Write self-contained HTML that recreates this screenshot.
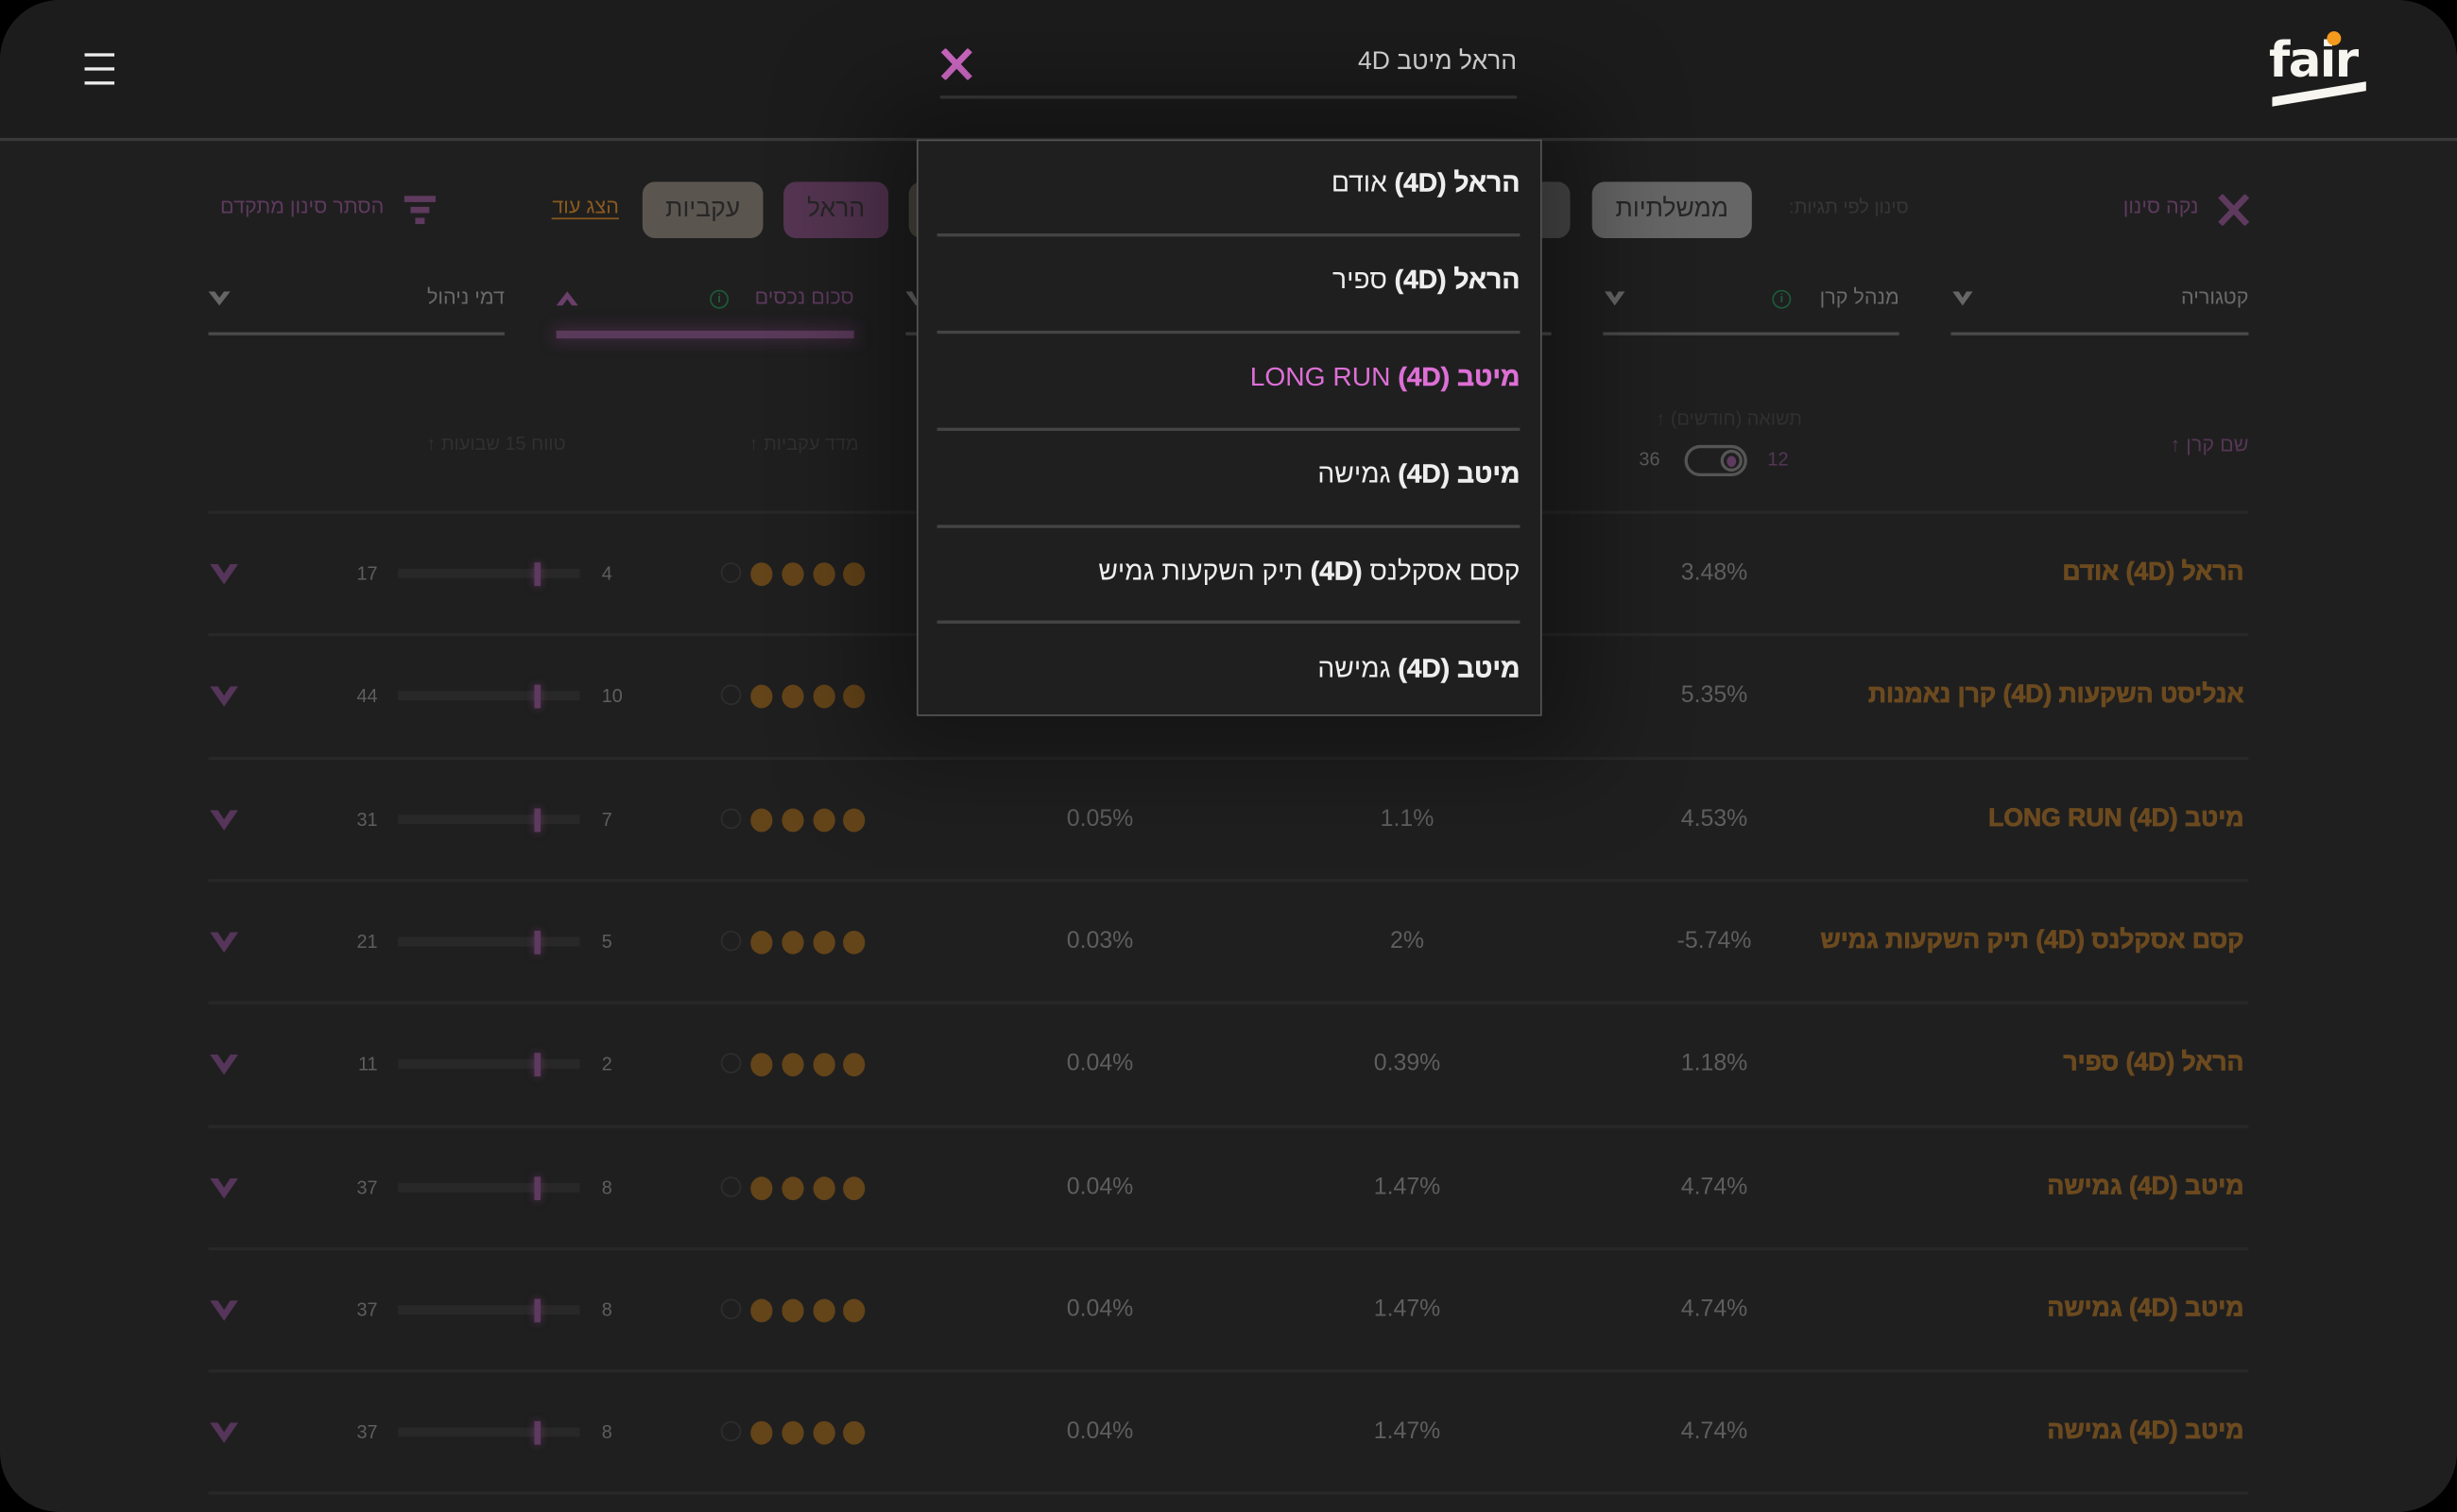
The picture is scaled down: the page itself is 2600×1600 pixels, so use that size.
<!DOCTYPE html>
<html><head><meta charset="utf-8"><style>
html,body{margin:0;padding:0;background:#000;width:2600px;height:1600px;overflow:hidden}
#s{position:absolute;left:0;top:0;width:1568px;height:965px;transform:scale(1.65816,1.65803);transform-origin:0 0;background:#1f1f1f;border-radius:38px;overflow:hidden;font-family:"Liberation Sans","Noto Sans CJK JP",sans-serif}
.a{position:absolute;white-space:nowrap}
.r{direction:rtl;text-align:right}
.hdr{position:absolute;left:0;top:0;width:1568px;height:88px;background:#1c1c1c;border-bottom:2px solid #3a3a3a}
.sep{position:absolute;left:133px;width:1302px;height:2px;background:#282828}
.nm{font-weight:bold;font-size:16px;color:#6c4a1f;-webkit-text-stroke:0.5px #6c4a1f}
.num{font-size:15px;color:#5e5e5e}
.dot{position:absolute;width:14px;height:15px;border-radius:50%;background:#644419}
.chip{position:absolute;height:36px;border-radius:8px;font-size:16px;line-height:36px;text-align:center;color:#262626}
.hd{font-size:13px;color:#5a5a5a}
.ln{position:absolute;height:2px;background:#4a4a4a}
.dd{position:absolute;left:585px;top:89px;width:397px;height:366px;background:#1f1f1f;border:1px solid #555;box-shadow:0 0 60px 30px rgba(0,0,0,.35)}
.it{position:absolute;right:13px;font-size:17px;color:#eee;direction:rtl}
.it b{font-weight:bold;-webkit-text-stroke:0.3px currentColor}
.dl{position:absolute;left:12px;width:372px;height:2px;background:#444}
.inf{position:absolute;width:10px;height:10px;border:1.5px solid #1d5a3a;border-radius:50%;font-size:8px;line-height:10px;text-align:center;color:#1d5a3a;font-weight:bold}
</style></head><body><div id="s">
<div class="hdr"></div>
<div class="a" style="left:54px;top:34px;width:19px;height:2px;background:#eee"></div>
<div class="a" style="left:54px;top:43px;width:19px;height:2px;background:#eee"></div>
<div class="a" style="left:54px;top:52px;width:19px;height:2px;background:#eee"></div>
<div class="a r" style="right:600px;top:31px;font-size:16px;color:#ddd">הראל מיטב 4D</div>
<svg class="a" style="left:600px;top:31px" width="21" height="20"><path d="M2 1 L19 19 M19 1 L2 19" stroke="#d26ac8" stroke-width="4"/></svg>
<div class="a" style="left:600px;top:61px;width:368px;height:2px;background:#3c3c3c"></div>
<div class="a" style="left:1448px;top:21px;font-size:31px;font-weight:bold;color:#f7f5ef;letter-spacing:-1px;font-family:'DejaVu Sans',sans-serif">fair</div>
<div class="a" style="left:1485px;top:20px;width:9px;height:9px;border-radius:50%;background:#f49a1c"></div>
<svg class="a" style="left:1450px;top:52px" width="62" height="17"><path d="M0 10 L60 0 L60 6 L0 16Z" fill="#f7f5ef"/></svg>

<svg class="a" style="left:1415px;top:124px" width="21" height="20"><path d="M2 1 L19 19 M19 1 L2 19" stroke="#5e3a5e" stroke-width="4"/></svg>
<div class="a r" style="right:165px;top:124px;font-size:13px;color:#5e3a5e">נקה סינון</div>
<div class="a r" style="right:350px;top:125px;font-size:12px;color:#363636">סינון לפי תגיות:</div>
<div class="chip" style="left:1016px;top:116px;width:102px;background:#666">ממשלתיות</div>
<div class="chip" style="left:960px;top:116px;width:42px;background:#4a4a4a"></div>
<div class="chip" style="left:500px;top:116px;width:67px;background:#553552">הראל</div>
<div class="chip" style="left:580px;top:116px;width:20px;background:#4a4640"></div>
<div class="chip" style="left:410px;top:116px;width:77px;background:#5b5550">עקביות</div>
<div class="a r" style="right:1173px;top:124px;font-size:13px;color:#8a5a1f;border-bottom:1px solid #8a5a1f;line-height:15px">הצג עוד</div>
<div class="a" style="left:258px;top:125px;width:20px;height:4px;background:#5e3a5e"></div>
<div class="a" style="left:262px;top:132px;width:12px;height:4px;background:#5e3a5e"></div>
<div class="a" style="left:265px;top:139px;width:6px;height:4px;background:#5e3a5e"></div>
<div class="a r" style="right:1323px;top:124px;font-size:13px;color:#5e3a5e">הסתר סינון מתקדם</div>

<div class="a r hd" style="right:133px;top:182px;color:#6a6a6a">קטגוריה</div>
<svg class="a" style="left:1246px;top:186px" width="13" height="10"><path d="M0 0 L6.5 9 L13 0 L9 0 L6.5 4 L4 0Z" fill="#666"/></svg>
<div class="ln" style="left:1245px;top:212px;width:190px"></div>
<div class="a r hd" style="right:356px;top:182px;color:#6a6a6a">מנהל קרן</div>
<div class="inf" style="left:1131px;top:185px">i</div>
<svg class="a" style="left:1024px;top:186px" width="13" height="10"><path d="M0 0 L6.5 9 L13 0 L9 0 L6.5 4 L4 0Z" fill="#666"/></svg>
<div class="ln" style="left:1023px;top:212px;width:189px"></div>
<div class="a r hd" style="right:1023px;top:182px;color:#5e3a5e">סכום נכסים</div>
<div class="inf" style="left:453px;top:185px">i</div>
<svg class="a" style="left:355px;top:185px" width="14" height="10"><path d="M0 10 L7 1 L14 10 L10 10 L7 6 L4 10Z" fill="#6a3f6a"/></svg>
<div class="a" style="left:355px;top:211px;width:190px;height:5px;background:#5a3a5a;box-shadow:0 0 10px 2px rgba(120,60,120,.35)"></div>
<svg class="a" style="left:578px;top:186px" width="8" height="10"><path d="M0 0 L6.5 9 L8 7 L4 0Z" fill="#666"/></svg>
<div class="ln" style="left:578px;top:212px;width:8px"></div>
<div class="ln" style="left:982px;top:212px;width:8px"></div>
<div class="a r hd" style="right:1246px;top:182px;color:#6a6a6a">דמי ניהול</div>
<svg class="a" style="left:133px;top:186px" width="14" height="10"><path d="M0 0 L7 9 L14 0 L10 0 L7 4 L4 0Z" fill="#666"/></svg>
<div class="ln" style="left:133px;top:212px;width:189px"></div>

<div class="a r hd" style="right:133px;top:276px;color:#553655">שם קרן ↑</div>
<div class="a r" style="right:418px;top:260px;font-size:12px;color:#303030">תשואה (חודשים) ↑</div>
<div class="a" style="left:1046px;top:286px;font-size:12px;color:#5a5a5a">36</div>
<div class="a" style="left:1075px;top:284px;width:40px;height:20px;border:2px solid #555;border-radius:12px;box-sizing:border-box"></div>
<div class="a" style="left:1098px;top:287px;width:14px;height:14px;border:2px solid #555;border-radius:50%;box-sizing:border-box"></div>
<div class="a" style="left:1102px;top:291px;width:6px;height:7px;border-radius:50%;background:#5e3a5e"></div>
<div class="a" style="left:1128px;top:286px;font-size:12px;color:#553655">12</div>
<div class="a r" style="right:1020px;top:276px;font-size:12px;color:#303030">מדד עקביות ↑</div>
<div class="a r" style="right:1207px;top:276px;font-size:12px;color:#303030">טווח 15 שבועות ↑</div>

<div id="rows"></div>

<div class="dd">
<div class="it" style="top:17px"><b>הראל (4D)</b> אודם</div>
<div class="dl" style="top:59px"></div>
<div class="it" style="top:79px"><b>הראל (4D)</b> ספיר</div>
<div class="dl" style="top:121px"></div>
<div class="it" style="top:141px;color:#dd6fd6"><b>מיטב (4D)</b> LONG RUN</div>
<div class="dl" style="top:183px"></div>
<div class="it" style="top:203px"><b>מיטב (4D)</b> גמישה</div>
<div class="dl" style="top:245px"></div>
<div class="it" style="top:265px">קסם אסקלנס <b>(4D)</b> תיק השקעות גמיש</div>
<div class="dl" style="top:306px"></div>
<div class="it" style="top:327px"><b>מיטב (4D)</b> גמישה</div>
</div>
</div>
<script>
var d=[["הראל (4D) אודם","3.48%","","","4","17"],["אנליסט השקעות (4D) קרן נאמנות","5.35%","","","10","44"],["מיטב (4D) LONG RUN","4.53%","1.1%","0.05%","7","31"],["קסם אסקלנס (4D) תיק השקעות גמיש","-5.74%","2%","0.03%","5","21"],["הראל (4D) ספיר","1.18%","0.39%","0.04%","2","11"],["מיטב (4D) גמישה","4.74%","1.47%","0.04%","8","37"],["מיטב (4D) גמישה","4.74%","1.47%","0.04%","8","37"],["מיטב (4D) גמישה","4.74%","1.47%","0.04%","8","37"]];
var h="";
for(var i=0;i<9;i++){h+='<div class="sep" style="top:'+(326+i*78.3)+'px"></div>';}
d.forEach(function(r,i){var y=366+i*78.3;
h+='<div class="a r nm" style="right:136px;top:'+(y-9)+'px">'+r[0]+'</div>';
h+='<div class="a num" style="left:1054px;width:80px;text-align:center;top:'+(y-9)+'px">'+r[1]+'</div>';
h+='<div class="a num" style="left:858px;width:80px;text-align:center;top:'+(y-9)+'px">'+r[2]+'</div>';
h+='<div class="a num" style="left:662px;width:80px;text-align:center;top:'+(y-9)+'px">'+r[3]+'</div>';
h+='<div class="a" style="left:460px;top:'+(y-7)+'px;width:11px;height:11px;border:1.5px solid #2e2e2e;border-radius:50%"></div>';
[479,499,519,538].forEach(function(x){h+='<div class="dot" style="left:'+x+'px;top:'+(y-7)+'px"></div>';});
h+='<div class="a" style="left:254px;top:'+(y-3)+'px;width:116px;height:6px;background:#282828"></div>';
h+='<div class="a" style="left:341px;top:'+(y-7)+'px;width:4px;height:15px;background:#5e3a5e;box-shadow:0 0 5px rgba(140,70,140,.5)"></div>';
h+='<div class="a" style="left:384px;top:'+(y-7)+'px;font-size:12px;color:#5e5e5e">'+r[4]+'</div>';
h+='<div class="a" style="right:1327px;top:'+(y-7)+'px;font-size:12px;color:#5e5e5e;text-align:right">'+r[5]+'</div>';
h+='<svg class="a" style="left:134px;top:'+(y-6)+'px" width="18" height="14"><path d="M0 0 L9 13 L18 0 L13 0 L9 6 L5 0Z" fill="#56355a"/></svg>';
});
document.getElementById("rows").outerHTML=h;
</script>
</body></html>
